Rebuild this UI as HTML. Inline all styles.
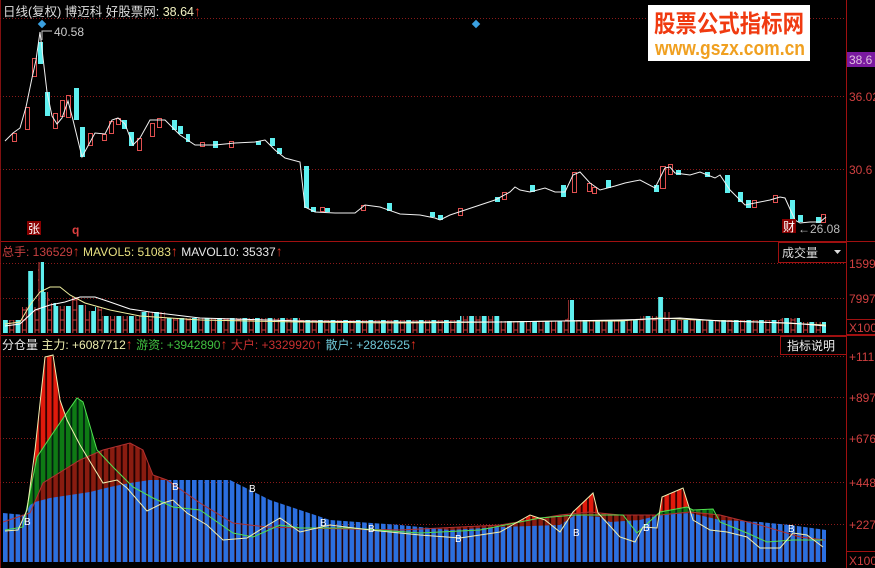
<!DOCTYPE html>
<html><head><meta charset="utf-8"><style>
body{margin:0;background:#000;width:875px;height:568px;overflow:hidden;font-family:"Liberation Sans","Noto Sans CJK SC",sans-serif}
svg{position:absolute;left:0;top:0}
text{font-family:"Liberation Sans","Noto Sans CJK SC",sans-serif}
.ar{fill:#e03020;font-weight:bold;font-size:14px}
</style></head><body>
<svg width="875" height="568" viewBox="0 0 875 568">
<defs>
<pattern id="pb" x="3" y="0" width="6.3" height="10" patternUnits="userSpaceOnUse"><rect width="4.6" height="10" fill="#2b6fe0"/></pattern>
<pattern id="pr" x="3" y="0" width="6.3" height="10" patternUnits="userSpaceOnUse"><rect width="4.6" height="10" fill="#e01a0c"/><rect x="4.6" width="1.7" height="10" fill="#300"/></pattern>
<pattern id="pg" x="3" y="0" width="6.3" height="10" patternUnits="userSpaceOnUse"><rect width="4.6" height="10" fill="#0e7a14"/><rect x="4.6" width="1.7" height="10" fill="#021"/></pattern>
<pattern id="pd" x="3" y="0" width="6.3" height="10" patternUnits="userSpaceOnUse"><rect width="4.6" height="10" fill="#8a1c10"/><rect x="4.6" width="1.7" height="10" fill="#200"/></pattern>
<pattern id="vc" x="3" y="0" width="12.6" height="10" patternUnits="userSpaceOnUse"><rect width="4.8" height="10" fill="#5ff0f0"/><rect x="6.8" y="0" width="4" height="10" fill="none" stroke="#d04040" stroke-width="1"/></pattern>
</defs>
<line x1="0" y1="241.5" x2="875" y2="241.5" stroke="#a01010"/>
<line x1="0" y1="335.5" x2="875" y2="335.5" stroke="#a01010"/>
<line x1="846.5" y1="0" x2="846.5" y2="568" stroke="#a01010"/>
<line x1="0.5" y1="0" x2="0.5" y2="568" stroke="#801010"/>
<g stroke="#8a1a1a" stroke-dasharray="1,2">
<line x1="0" y1="18.5" x2="846" y2="18.5"/><line x1="0" y1="96.5" x2="846" y2="96.5"/><line x1="0" y1="169.5" x2="846" y2="169.5"/>
<line x1="0" y1="263.5" x2="846" y2="263.5"/><line x1="0" y1="298.5" x2="846" y2="298.5"/>
<line x1="0" y1="356.5" x2="846" y2="356.5"/><line x1="0" y1="397.5" x2="846" y2="397.5"/><line x1="0" y1="438.5" x2="846" y2="438.5"/><line x1="0" y1="482.5" x2="846" y2="482.5"/><line x1="0" y1="524.5" x2="846" y2="524.5"/>
</g>
<g fill="#5ff0f0">
<rect x="38" y="42" width="5" height="22"/><rect x="45" y="92" width="5" height="24"/><rect x="74" y="88" width="5" height="32"/><rect x="80" y="127" width="5" height="30"/><rect x="122" y="120" width="5" height="9"/><rect x="129" y="132" width="5" height="14"/><rect x="172" y="120" width="5" height="10"/><rect x="178" y="126" width="5" height="8"/><rect x="186" y="134" width="4" height="8"/><rect x="213" y="141" width="5" height="7"/><rect x="256" y="141" width="5" height="4"/><rect x="270" y="138" width="5" height="8"/><rect x="277" y="148" width="5" height="6"/><rect x="304" y="166" width="5" height="42"/><rect x="311" y="207" width="5" height="5"/><rect x="325" y="208" width="5" height="4"/><rect x="387" y="203" width="5" height="8"/><rect x="430" y="212" width="5" height="5"/><rect x="438" y="215" width="5" height="5"/><rect x="495" y="197" width="5" height="5"/><rect x="530" y="185" width="5" height="7"/><rect x="561" y="185" width="5" height="12"/><rect x="606" y="180" width="5" height="8"/><rect x="654" y="185" width="5" height="7"/><rect x="676" y="170" width="5" height="5"/><rect x="705" y="172" width="5" height="5"/><rect x="725" y="175" width="5" height="18"/><rect x="738" y="192" width="5" height="10"/><rect x="746" y="200" width="5" height="8"/><rect x="790" y="200" width="5" height="20"/><rect x="798" y="215" width="5" height="7"/><rect x="816" y="217" width="5" height="6"/>
</g>
<g fill="none" stroke="#e05050">
<rect x="12.5" y="133.5" width="4" height="8"/><rect x="25.5" y="107.5" width="4" height="22"/><rect x="32.5" y="58.5" width="4" height="18"/><rect x="53.5" y="113.5" width="4" height="15"/><rect x="60.5" y="100.5" width="4" height="16"/><rect x="66.5" y="95.5" width="4" height="22"/><rect x="88.5" y="133.5" width="4" height="12"/><rect x="102.5" y="134.5" width="4" height="6"/><rect x="109.5" y="121.5" width="4" height="12"/><rect x="116.5" y="118.5" width="4" height="6"/><rect x="137.5" y="138.5" width="4" height="12"/><rect x="150.5" y="123.5" width="4" height="13"/><rect x="157.5" y="118.5" width="4" height="9"/><rect x="200.5" y="142.5" width="4" height="4"/><rect x="229.5" y="141.5" width="4" height="6"/><rect x="320.5" y="207.5" width="4" height="4"/><rect x="361.5" y="205.5" width="4" height="5"/><rect x="458.5" y="208.5" width="4" height="7"/><rect x="502.5" y="192.5" width="4" height="7"/><rect x="572.5" y="172.5" width="4" height="20"/><rect x="587.5" y="183.5" width="4" height="8"/><rect x="592.5" y="187.5" width="4" height="6"/><rect x="660.5" y="166.5" width="5" height="22"/><rect x="668.5" y="164.5" width="4" height="10"/><rect x="752.5" y="200.5" width="4" height="7"/><rect x="773.5" y="195.5" width="4" height="7"/><rect x="821.5" y="214.5" width="4" height="8"/>
</g>
<polyline fill="none" stroke="#f0f0f0" stroke-width="1" points="5,141 13,133 20,128 26,107 32,78 36,60 40,32 47,92 52,116 57,124 62,118 68,101 73,120 82,157 95,133 105,134 112,120 118,118 125,124 133,145 140,138 150,120 165,120 180,135 195,145 215,145 235,143 255,142 265,140 275,150 285,158 300,162 305,207 315,212 335,213 355,213 365,205 380,207 400,214 420,215 435,218 440,220 450,215 465,210 480,205 495,200 510,192 515,187 520,190 530,192 545,188 555,192 565,192 573,175 580,172 590,183 600,190 615,186 625,183 640,180 655,188 665,168 670,167 675,173 690,175 700,172 715,178 720,175 730,190 745,205 760,202 770,200 780,197 785,198 795,220 800,223 810,222 820,222 826,217"/>
<polyline fill="none" stroke="#ccc" points="42,40 42,31 52,31"/>
<rect x="39" y="21" width="6" height="6" fill="#3aa0e0" transform="rotate(45 42 24)"/>
<rect x="473" y="21" width="6" height="6" fill="#3aa0e0" transform="rotate(45 476 24)"/>
<text x="54" y="36" fill="#ccc" font-size="12">40.58</text>
<text x="3" y="16" fill="#ddd" font-size="12.5">日线(复权) 博迈科 好股票网: <tspan fill="#f0f0c0">38.64</tspan><tspan class="ar">↑</tspan></text>
<rect x="27" y="221" width="14" height="14" fill="#800"/>
<text x="28" y="233" fill="#fff" font-size="12">张</text>
<text x="72" y="234" fill="#e04040" font-size="12" font-weight="bold">q</text>
<rect x="782" y="219" width="14" height="14" fill="#800"/>
<text x="783" y="231" fill="#fff" font-size="12">财</text>
<text x="798" y="233" fill="#bbb" font-size="12">←26.08</text>
<rect x="847" y="52" width="28" height="15" fill="#7a1aa0"/>
<text x="849" y="64" fill="#e0c0e0" font-size="12">38.6</text>
<g fill="#d04040" font-size="12">
<text x="849" y="101">36.02</text><text x="849" y="174">30.6</text>
<text x="849" y="268">1599</text><text x="849" y="303">7997</text><text x="849" y="332">X100</text>
<text x="849" y="361">+111</text><text x="849" y="402">+897</text><text x="849" y="443">+676</text><text x="849" y="487">+448</text><text x="849" y="529">+227</text><text x="849" y="565">X100</text>
</g>
<rect x="846.5" y="319.5" width="30" height="15" fill="none" stroke="#a01010"/>
<rect x="846.5" y="551.5" width="30" height="17" fill="none" stroke="#a01010"/>
<rect x="648" y="5" width="162" height="56" fill="#fff"/>
<text x="654" y="32" fill="#f03a10" font-size="24" font-weight="bold" textLength="150" lengthAdjust="spacingAndGlyphs" font-family="Noto Sans CJK SC">股票公式指标网</text>
<text x="655" y="55" fill="#f0a020" font-size="20" font-weight="bold" textLength="150" lengthAdjust="spacingAndGlyphs">www.gszx.com.cn</text>
<text x="2" y="256" font-size="12"><tspan fill="#c84040">总手: 136529</tspan><tspan class="ar">↑</tspan><tspan fill="#e8e080">  MAVOL5: 51083</tspan><tspan class="ar">↑</tspan><tspan fill="#e8e8e8">  MAVOL10: 35337</tspan><tspan class="ar">↑</tspan></text>
<rect x="778.5" y="242.5" width="68" height="20" fill="#000" stroke="#a01010"/>
<text x="782" y="257" fill="#ddd" font-size="12">成交量</text>
<path d="M834 250h7l-3.5 4z" fill="#ddd"/>
<path fill="url(#vc)" d="M3,333 V320 H22 V307 H28 V271 H34 V307 H38 V262 H44 V292 H50 V303 H56 V306 H72 V297 H78 V305 H86 V311 H95 V307 H102 V316 H140 V312 H165 V318 H300 V320 H460 V316 H500 V321 H565 V318 H568 V300 H574 V320 H640 V316 H658 V297 H664 V312 H670 V320 H780 V318 H800 V322 H826 V333Z"/>
<polyline fill="none" stroke="#f0f0a0" points="5,324 20,322 30,305 40,292 50,287 60,287 70,295 85,303 110,310 140,316 200,320 300,322 400,323 500,322 560,321 620,321 660,318 700,320 760,322 826,325"/>
<polyline fill="none" stroke="#fff" points="5,326 20,324 35,310 50,305 65,302 80,297 95,297 110,302 130,309 150,312 200,318 300,321 400,322 500,322 560,321 620,320 680,318 720,321 790,323 826,326"/>
<text x="2" y="349" font-size="12"><tspan fill="#eee">分仓量 </tspan><tspan fill="#f0f0b0">主力: +6087712</tspan><tspan class="ar">↑</tspan><tspan fill="#40c040">  游资: +3942890</tspan><tspan class="ar">↑</tspan><tspan fill="#c83030">  大户: +3329920</tspan><tspan class="ar">↑</tspan><tspan fill="#70c8d8">  散户: +2826525</tspan><tspan class="ar">↑</tspan></text>
<rect x="780.5" y="336.5" width="66" height="18" fill="#000" stroke="#a01010"/>
<text x="787" y="350" fill="#eee" font-size="12">指标说明</text>
<path fill="url(#pr)" d="M5,531 L18,530 27,510 35,450 45,357 53,355 60,400 67,420 80,445 103,483 117,480 127,488 147,511 163,503 173,500 187,513 207,525 223,540 247,538 263,528 280,518 300,532 330,525 370,530 420,535 460,538 500,532 530,515 545,520 560,532 573,512 593,493 598,513 620,537 635,542 643,527 657,528 662,497 683,488 693,520 710,530 727,532 747,537 760,548 780,548 793,533 807,535 823,547 L823,562 5,562Z"/>
<path fill="url(#pg)" d="M5,530 L23,527 37,457 53,433 77,398 83,402 97,450 113,467 133,487 153,498 173,507 200,510 233,533 253,537 280,525 300,528 350,528 420,533 480,530 540,518 575,515 623,515 637,533 660,512 687,507 693,510 713,509 720,522 747,533 767,542 793,540 823,540 L823,562 5,562Z"/>
<path fill="url(#pd)" d="M3,522 L30,513 43,483 80,460 103,450 130,443 143,450 153,475 167,480 200,503 233,523 267,527 300,528 400,530 500,525 560,515 590,512 620,515 660,515 690,512 720,515 760,525 800,537 825,540 L825,562 3,562Z"/>
<path fill="url(#pb)" d="M3,562 V513 L25,515 30,505 35,502 50,498 70,495 90,492 110,487 130,483 150,480 230,480 250,490 270,500 300,510 330,520 400,525 450,530 500,527 560,525 575,515 600,517 610,522 640,520 660,515 690,513 720,520 760,522 790,525 826,530 V562Z"/>
<polyline fill="none" stroke="#b03030" points="3,522 30,513 43,483 80,460 103,450 130,443 143,450 153,475 167,480 200,503 233,523 267,527 300,528 400,530 500,525 560,515 590,512 620,515 660,515 690,512 720,515 760,525 800,537 825,540"/>
<polyline fill="none" stroke="#50e050" points="5,530 23,527 37,457 53,433 77,398 83,402 97,450 113,467 133,487 153,498 173,507 200,510 233,533 253,537 280,525 300,528 350,528 420,533 480,530 540,518 575,515 623,515 637,533 660,512 687,507 693,510 713,509 720,522 747,533 767,542 793,540 823,540"/>
<polyline fill="none" stroke="#f0f0b0" points="5,531 18,530 27,510 35,450 45,357 53,355 60,400 67,420 80,445 103,483 117,480 127,488 147,511 163,503 173,500 187,513 207,525 223,540 247,538 263,528 280,518 300,532 330,525 370,530 420,535 460,538 500,532 530,515 545,520 560,532 573,512 593,493 598,513 620,537 635,542 643,527 657,528 662,497 683,488 693,520 710,530 727,532 747,537 760,548 780,548 793,533 807,535 823,547"/>
<g fill="#fff" font-size="10">
<text x="24" y="525">B</text><text x="172" y="490">B</text><text x="249" y="492">B</text><text x="320" y="526">B</text><text x="368" y="532">B</text><text x="455" y="542">B</text><text x="573" y="536">B</text><text x="643" y="531">B</text><text x="788" y="532">B</text>
</g>
</svg>
</body></html>
